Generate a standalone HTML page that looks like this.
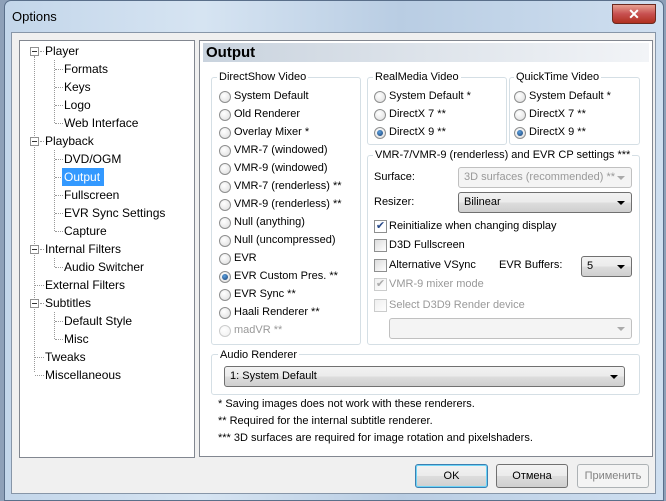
<!DOCTYPE html>
<html><head><meta charset="utf-8"><style>
*{margin:0;padding:0;box-sizing:border-box}
body{width:666px;height:501px;overflow:hidden;position:relative;font-family:"Liberation Sans","Noto Sans CJK SC",sans-serif;font-size:11px;color:#000;background:#8ea0b8}
.a{position:absolute;white-space:nowrap}
.frame{left:4px;top:0;width:660px;height:501px;border-radius:7px 7px 0 0;background:linear-gradient(90deg,#c3d6ea 0%,#d6e4f2 30%,#b9cde3 60%,#cfdff0 100%);border:1px solid #5a6f8a}
.client{left:11px;top:32px;width:645px;height:462px;background:#f0f0f0;border:1px solid #8796a8}
.tree{left:19px;top:40px;width:176px;height:418px;background:#fff;border:1px solid #828790}
.panel{left:199px;top:40px;width:454px;height:417px;background:#fff;border:1px solid #828790}
.hdr{left:203px;top:43px;width:446px;height:19px;background:linear-gradient(90deg,#c9d3de,#f2f4f7);font-weight:bold;font-size:15px;padding-left:3px;line-height:19px}
.grp{position:absolute;border:1px solid #d5dfe5;border-radius:3px}
.gl{position:absolute;background:#fff;padding:0 2px;line-height:14px}
.r{position:absolute;width:12px;height:12px;border-radius:50%;border:1px solid #8e8f8f;background:radial-gradient(circle at 40% 35%,#fff,#dcdcdc)}
.r.on::after{content:"";position:absolute;left:2px;top:2px;width:6px;height:6px;border-radius:50%;background:radial-gradient(circle at 40% 35%,#5aa0e0,#173d6e)}
.r.dis{opacity:.45}
.cb{position:absolute;width:13px;height:13px;border:1px solid #8e8f8f;background:linear-gradient(135deg,#dcdcdc,#fff)}
.cb.dis{opacity:.45}
.dd{position:absolute;height:21px;border:1px solid #707070;border-radius:3px;background:linear-gradient(#f2f2f2,#ebebeb 50%,#dddddd 51%,#cfcfcf);padding-left:5px;line-height:19px}
.dd::after{content:"";position:absolute;right:6px;top:8px;border-left:4px solid transparent;border-right:4px solid transparent;border-top:4px solid #000}
.dd.dis{background:#f4f4f4;border-color:#c0c0c0;color:#999}
.dd.dis::after{border-top-color:#aaa}
.btn{position:absolute;top:464px;height:24px;border:1px solid #707070;border-radius:3px;background:linear-gradient(#f2f2f2,#ebebeb 50%,#dddddd 51%,#cfcfcf);text-align:center;line-height:22px}
.dot{position:absolute;border-left:1px dotted #999}
.hd{position:absolute;border-top:1px dotted #999;height:0}
.pm{position:absolute;width:9px;height:9px;border:1px solid #919191;background:#fff}
.pm::after{content:"";position:absolute;left:1px;top:3px;width:5px;height:1px;background:#333}
</style></head><body>
<div class="a frame"></div>
<div class="a" style="left:12px;top:9px;font-size:13px">Options</div>
<div class="a" style="left:612px;top:4px;width:44px;height:20px;border-radius:0 0 4px 4px;background:linear-gradient(#e8a090,#c75050 50%,#b03020);border:1px solid #6b2a20;color:#fff;font-weight:bold;text-align:center;line-height:18px;font-size:14px">✕</div>
<div class="a client"></div>
<div class="a tree"></div>

<div class="dot" style="left:34px;top:56px;height:316px"></div>
<div class="dot" style="left:54px;top:60px;height:63px"></div>
<div class="dot" style="left:54px;top:150px;height:81px"></div>
<div class="dot" style="left:54px;top:258px;height:9px"></div>
<div class="dot" style="left:54px;top:312px;height:27px"></div>
<div class="pm" style="left:30px;top:47px"></div>
<div class="pm" style="left:30px;top:137px"></div>
<div class="pm" style="left:30px;top:245px"></div>
<div class="pm" style="left:30px;top:299px"></div>
<div class="hd" style="left:40px;top:51px;width:4px"></div>
<div class="hd" style="left:40px;top:141px;width:4px"></div>
<div class="hd" style="left:40px;top:249px;width:4px"></div>
<div class="hd" style="left:40px;top:303px;width:4px"></div>
<div class="hd" style="left:35px;top:285px;width:9px"></div>
<div class="hd" style="left:35px;top:357px;width:9px"></div>
<div class="hd" style="left:35px;top:375px;width:9px"></div>
<div class="hd" style="left:55px;top:69px;width:8px"></div>
<div class="hd" style="left:55px;top:87px;width:8px"></div>
<div class="hd" style="left:55px;top:105px;width:8px"></div>
<div class="hd" style="left:55px;top:123px;width:8px"></div>
<div class="hd" style="left:55px;top:159px;width:8px"></div>
<div class="hd" style="left:55px;top:177px;width:8px"></div>
<div class="hd" style="left:55px;top:195px;width:8px"></div>
<div class="hd" style="left:55px;top:213px;width:8px"></div>
<div class="hd" style="left:55px;top:231px;width:8px"></div>
<div class="hd" style="left:55px;top:267px;width:8px"></div>
<div class="hd" style="left:55px;top:321px;width:8px"></div>
<div class="hd" style="left:55px;top:339px;width:8px"></div>

<div class="a" style="left:45px;top:44px;font-size:12px">Player</div>
<div class="a" style="left:64px;top:62px;font-size:12px">Formats</div>
<div class="a" style="left:64px;top:80px;font-size:12px">Keys</div>
<div class="a" style="left:64px;top:98px;font-size:12px">Logo</div>
<div class="a" style="left:64px;top:116px;font-size:12px">Web Interface</div>
<div class="a" style="left:45px;top:134px;font-size:12px">Playback</div>
<div class="a" style="left:64px;top:152px;font-size:12px">DVD/OGM</div>
<div class="a" style="left:62px;top:168px;width:42px;height:18px;background:#3399ff;color:#fff;padding:2px 0 0 2px;font-size:12px">Output</div>
<div class="a" style="left:64px;top:188px;font-size:12px">Fullscreen</div>
<div class="a" style="left:64px;top:206px;font-size:12px">EVR Sync Settings</div>
<div class="a" style="left:64px;top:224px;font-size:12px">Capture</div>
<div class="a" style="left:45px;top:242px;font-size:12px">Internal Filters</div>
<div class="a" style="left:64px;top:260px;font-size:12px">Audio Switcher</div>
<div class="a" style="left:45px;top:278px;font-size:12px">External Filters</div>
<div class="a" style="left:45px;top:296px;font-size:12px">Subtitles</div>
<div class="a" style="left:64px;top:314px;font-size:12px">Default Style</div>
<div class="a" style="left:64px;top:332px;font-size:12px">Misc</div>
<div class="a" style="left:45px;top:350px;font-size:12px">Tweaks</div>
<div class="a" style="left:45px;top:368px;font-size:12px">Miscellaneous</div>

<div class="a panel"></div>
<div class="a hdr">Output</div>

<div class="grp" style="left:211px;top:77px;width:150px;height:268px"></div>
<div class="gl" style="left:217px;top:70px">DirectShow Video</div>
<div class="r" style="left:219px;top:91px"></div><div class="a" style="left:234px;top:90px">System Default</div>
<div class="r" style="left:219px;top:109px"></div><div class="a" style="left:234px;top:108px">Old Renderer</div>
<div class="r" style="left:219px;top:127px"></div><div class="a" style="left:234px;top:126px">Overlay Mixer *</div>
<div class="r" style="left:219px;top:145px"></div><div class="a" style="left:234px;top:144px">VMR-7 (windowed)</div>
<div class="r" style="left:219px;top:163px"></div><div class="a" style="left:234px;top:162px">VMR-9 (windowed)</div>
<div class="r" style="left:219px;top:181px"></div><div class="a" style="left:234px;top:180px">VMR-7 (renderless) **</div>
<div class="r" style="left:219px;top:199px"></div><div class="a" style="left:234px;top:198px">VMR-9 (renderless) **</div>
<div class="r" style="left:219px;top:217px"></div><div class="a" style="left:234px;top:216px">Null (anything)</div>
<div class="r" style="left:219px;top:235px"></div><div class="a" style="left:234px;top:234px">Null (uncompressed)</div>
<div class="r" style="left:219px;top:253px"></div><div class="a" style="left:234px;top:252px">EVR</div>
<div class="r on" style="left:219px;top:271px"></div><div class="a" style="left:234px;top:270px">EVR Custom Pres. **</div>
<div class="r" style="left:219px;top:289px"></div><div class="a" style="left:234px;top:288px">EVR Sync **</div>
<div class="r" style="left:219px;top:307px"></div><div class="a" style="left:234px;top:306px">Haali Renderer **</div>
<div class="r dis" style="left:219px;top:325px"></div><div class="a" style="left:234px;top:324px;color:#999">madVR **</div>

<div class="grp" style="left:367px;top:77px;width:140px;height:68px"></div>
<div class="gl" style="left:373px;top:70px">RealMedia Video</div>
<div class="r" style="left:374px;top:91px"></div><div class="a" style="left:389px;top:90px">System Default *</div>
<div class="r" style="left:374px;top:109px"></div><div class="a" style="left:389px;top:108px">DirectX 7 **</div>
<div class="r on" style="left:374px;top:127px"></div><div class="a" style="left:389px;top:126px">DirectX 9 **</div>

<div class="grp" style="left:509px;top:77px;width:131px;height:68px"></div>
<div class="gl" style="left:514px;top:70px">QuickTime Video</div>
<div class="r" style="left:514px;top:91px"></div><div class="a" style="left:529px;top:90px">System Default *</div>
<div class="r" style="left:514px;top:109px"></div><div class="a" style="left:529px;top:108px">DirectX 7 **</div>
<div class="r on" style="left:514px;top:127px"></div><div class="a" style="left:529px;top:126px">DirectX 9 **</div>

<div class="grp" style="left:367px;top:155px;width:273px;height:190px"></div>
<div class="gl" style="left:373px;top:148px">VMR-7/VMR-9 (renderless) and EVR CP settings ***</div>
<div class="a" style="left:374px;top:171px">Surface:</div>
<div class="dd dis" style="left:458px;top:167px;width:174px">3D surfaces (recommended) **</div>
<div class="a" style="left:374px;top:196px">Resizer:</div>
<div class="dd" style="left:458px;top:192px;width:174px">Bilinear</div>
<div class="cb" style="left:374px;top:220px;background:#fff;color:#2a4b8a;font-size:11px;line-height:11px;text-align:center">✔</div><div class="a" style="left:389px;top:220px">Reinitialize when changing display</div>
<div class="cb" style="left:374px;top:239px"></div><div class="a" style="left:389px;top:239px">D3D Fullscreen</div>
<div class="cb" style="left:374px;top:259px"></div><div class="a" style="left:389px;top:259px">Alternative VSync</div>
<div class="a" style="left:499px;top:259px">EVR Buffers:</div>
<div class="dd" style="left:581px;top:256px;width:51px">5</div>
<div class="cb dis" style="left:374px;top:278px;color:#444;font-size:11px;line-height:11px;text-align:center">✔</div><div class="a" style="left:389px;top:278px;color:#999">VMR-9 mixer mode</div>
<div class="cb dis" style="left:374px;top:299px"></div><div class="a" style="left:389px;top:299px;color:#999">Select D3D9 Render device</div>
<div class="dd dis" style="left:389px;top:318px;width:243px"></div>

<div class="grp" style="left:211px;top:354px;width:429px;height:41px"></div>
<div class="gl" style="left:218px;top:348px">Audio Renderer</div>
<div class="dd" style="left:224px;top:366px;width:401px">1: System Default</div>

<div class="a" style="left:218px;top:398px">* Saving images does not work with these renderers.</div>
<div class="a" style="left:218px;top:415px">** Required for the internal subtitle renderer.</div>
<div class="a" style="left:218px;top:432px">*** 3D surfaces are required for image rotation and pixelshaders.</div>

<div class="btn" style="left:415px;width:73px;border-color:#3c7fb1;box-shadow:inset 0 0 0 1px #6dd4f7">OK</div>
<div class="btn" style="left:496px;width:72px">Отмена</div>
<div class="btn" style="left:577px;width:72px;background:#f4f4f4;border-color:#adb2b5;color:#838383">Применить</div>
</body></html>
